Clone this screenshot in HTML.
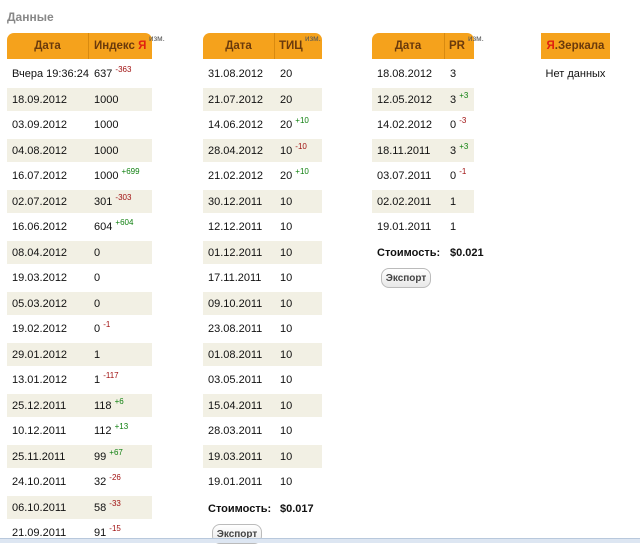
<!DOCTYPE html>
<html><head><meta charset="utf-8"><style>
body{margin:0;width:640px;height:542px;background:#fff;font-family:"Liberation Sans","DejaVu Sans",sans-serif;font-size:11px;color:#111;position:relative;overflow:hidden}
.t{position:absolute;top:33px}
.h{height:26px;background:#f5a21c;border-radius:7px 7px 0 0;display:flex;font-weight:bold;color:#6a3a0c;font-size:11.5px;line-height:26px;overflow:visible;position:relative}
.h div{box-sizing:border-box}
.r{height:25.5px;display:flex;line-height:25px;border-top:1px solid #fff;border-bottom:1px solid #fff;box-sizing:border-box}
.r div{padding-left:5px;box-sizing:border-box;white-space:nowrap}
sup{font-size:8px;line-height:0;vertical-align:5px}
.n{color:#a01010}.p{color:#108010}
.ya{color:#e02010}
.iz{position:absolute;top:-7px;color:#555;font-weight:normal;font-size:8px}
.cost{position:absolute;font-weight:bold;font-size:11px}
.btn{position:absolute;width:50px;height:20px;border:1px solid #bbb;border-radius:8px;background:linear-gradient(#fff,#e8e8e8);font-weight:bold;font-size:10px;color:#444;text-align:center;line-height:20px;box-sizing:border-box}
</style></head><body>
<div style="position:absolute;left:7px;top:10px;font-weight:bold;color:#888;font-size:12px">Данные</div>

<div class="t" style="left:7px;width:145px">
<div class="h"><div style="width:82px;text-align:center;border-right:1px solid #d88a10">Дата</div><div style="padding-left:5px;white-space:nowrap">Индекс <span class="ya">Я</span></div><span class="iz" style="left:142px">изм.</span></div>
<div style="padding-top:2px">
<div class="r" style="background:#fff"><div style="width:82px">Вчера 19:36:24</div><div>637 <sup class="n">-363</sup></div></div>
<div class="r" style="background:#f2f0e4"><div style="width:82px">18.09.2012</div><div>1000</div></div>
<div class="r" style="background:#fff"><div style="width:82px">03.09.2012</div><div>1000</div></div>
<div class="r" style="background:#f2f0e4"><div style="width:82px">04.08.2012</div><div>1000</div></div>
<div class="r" style="background:#fff"><div style="width:82px">16.07.2012</div><div>1000 <sup class="p">+699</sup></div></div>
<div class="r" style="background:#f2f0e4"><div style="width:82px">02.07.2012</div><div>301 <sup class="n">-303</sup></div></div>
<div class="r" style="background:#fff"><div style="width:82px">16.06.2012</div><div>604 <sup class="p">+604</sup></div></div>
<div class="r" style="background:#f2f0e4"><div style="width:82px">08.04.2012</div><div>0</div></div>
<div class="r" style="background:#fff"><div style="width:82px">19.03.2012</div><div>0</div></div>
<div class="r" style="background:#f2f0e4"><div style="width:82px">05.03.2012</div><div>0</div></div>
<div class="r" style="background:#fff"><div style="width:82px">19.02.2012</div><div>0 <sup class="n">-1</sup></div></div>
<div class="r" style="background:#f2f0e4"><div style="width:82px">29.01.2012</div><div>1</div></div>
<div class="r" style="background:#fff"><div style="width:82px">13.01.2012</div><div>1 <sup class="n">-117</sup></div></div>
<div class="r" style="background:#f2f0e4"><div style="width:82px">25.12.2011</div><div>118 <sup class="p">+6</sup></div></div>
<div class="r" style="background:#fff"><div style="width:82px">10.12.2011</div><div>112 <sup class="p">+13</sup></div></div>
<div class="r" style="background:#f2f0e4"><div style="width:82px">25.11.2011</div><div>99 <sup class="p">+67</sup></div></div>
<div class="r" style="background:#fff"><div style="width:82px">24.10.2011</div><div>32 <sup class="n">-26</sup></div></div>
<div class="r" style="background:#f2f0e4"><div style="width:82px">06.10.2011</div><div>58 <sup class="n">-33</sup></div></div>
<div class="r" style="background:#fff"><div style="width:82px">21.09.2011</div><div>91 <sup class="n">-15</sup></div></div>
</div></div>

<div class="t" style="left:203px;width:119px">
<div class="h"><div style="width:72px;text-align:center;border-right:1px solid #d88a10">Дата</div><div style="padding-left:4px;white-space:nowrap">ТИЦ</div><span class="iz" style="left:102px">изм.</span></div>
<div style="padding-top:2px">
<div class="r" style="background:#fff"><div style="width:72px">31.08.2012</div><div>20</div></div>
<div class="r" style="background:#f2f0e4"><div style="width:72px">21.07.2012</div><div>20</div></div>
<div class="r" style="background:#fff"><div style="width:72px">14.06.2012</div><div>20 <sup class="p">+10</sup></div></div>
<div class="r" style="background:#f2f0e4"><div style="width:72px">28.04.2012</div><div>10 <sup class="n">-10</sup></div></div>
<div class="r" style="background:#fff"><div style="width:72px">21.02.2012</div><div>20 <sup class="p">+10</sup></div></div>
<div class="r" style="background:#f2f0e4"><div style="width:72px">30.12.2011</div><div>10</div></div>
<div class="r" style="background:#fff"><div style="width:72px">12.12.2011</div><div>10</div></div>
<div class="r" style="background:#f2f0e4"><div style="width:72px">01.12.2011</div><div>10</div></div>
<div class="r" style="background:#fff"><div style="width:72px">17.11.2011</div><div>10</div></div>
<div class="r" style="background:#f2f0e4"><div style="width:72px">09.10.2011</div><div>10</div></div>
<div class="r" style="background:#fff"><div style="width:72px">23.08.2011</div><div>10</div></div>
<div class="r" style="background:#f2f0e4"><div style="width:72px">01.08.2011</div><div>10</div></div>
<div class="r" style="background:#fff"><div style="width:72px">03.05.2011</div><div>10</div></div>
<div class="r" style="background:#f2f0e4"><div style="width:72px">15.04.2011</div><div>10</div></div>
<div class="r" style="background:#fff"><div style="width:72px">28.03.2011</div><div>10</div></div>
<div class="r" style="background:#f2f0e4"><div style="width:72px">19.03.2011</div><div>10</div></div>
<div class="r" style="background:#fff"><div style="width:72px">19.01.2011</div><div>10</div></div>
</div></div>
<div class="cost" style="left:208px;top:503px">Стоимость:</div>
<div class="cost" style="left:280px;top:503px">$0.017</div>
<div class="btn" style="left:212px;top:524px">Экспорт</div>

<div class="t" style="left:372px;width:102px">
<div class="h"><div style="width:73px;text-align:center;border-right:1px solid #d88a10">Дата</div><div style="padding-left:4px;white-space:nowrap">PR</div><span class="iz" style="left:96px">изм.</span></div>
<div style="padding-top:2px">
<div class="r" style="background:#fff"><div style="width:73px">18.08.2012</div><div>3</div></div>
<div class="r" style="background:#f2f0e4"><div style="width:73px">12.05.2012</div><div>3 <sup class="p">+3</sup></div></div>
<div class="r" style="background:#fff"><div style="width:73px">14.02.2012</div><div>0 <sup class="n">-3</sup></div></div>
<div class="r" style="background:#f2f0e4"><div style="width:73px">18.11.2011</div><div>3 <sup class="p">+3</sup></div></div>
<div class="r" style="background:#fff"><div style="width:73px">03.07.2011</div><div>0 <sup class="n">-1</sup></div></div>
<div class="r" style="background:#f2f0e4"><div style="width:73px">02.02.2011</div><div>1</div></div>
<div class="r" style="background:#fff"><div style="width:73px">19.01.2011</div><div>1</div></div>
</div></div>
<div class="cost" style="left:377px;top:247px">Стоимость:</div>
<div class="cost" style="left:450px;top:247px">$0.021</div>
<div class="btn" style="left:381px;top:268px">Экспорт</div>

<div class="t" style="left:541px;width:69px">
<div class="h" style="border-radius:0;justify-content:center"><span><span class="ya">Я</span>.Зеркала</span></div>
<div style="text-align:center;line-height:26px;padding-top:2px">Нет данных</div>
</div>

<div style="position:absolute;left:0;top:538px;width:640px;height:4px;background:#dde6f2;border-top:1px solid #b8c8dc"></div>
</body></html>
